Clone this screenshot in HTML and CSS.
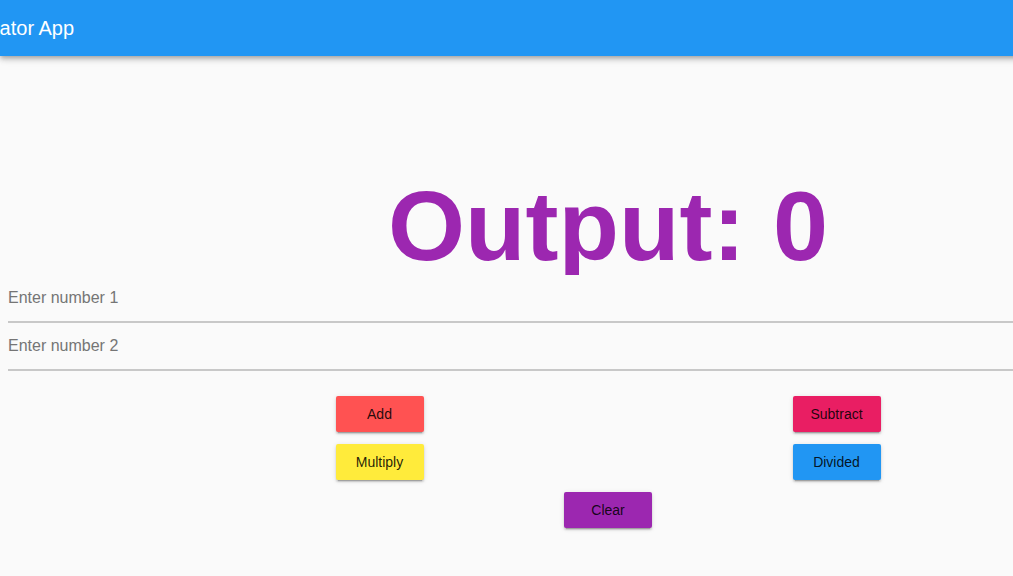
FILE: index.html
```html
<!DOCTYPE html>
<html lang="en">
<head>
<meta charset="utf-8">
<title>Calculator App</title>
<link rel="stylesheet" href="styles.css">
</head>
<body>
<div class="page">
  <header class="appbar">
    <h1 class="title">Calculator App</h1>
  </header>
  <main class="content">
    <div class="output">Output: 0</div>
    <div class="fields">
      <input class="field" type="text" placeholder="Enter number 1">
      <input class="field" type="text" placeholder="Enter number 2">
    </div>
    <div class="buttons">
      <div class="btn-col">
        <button class="btn btn-add">Add</button>
        <button class="btn btn-multiply">Multiply</button>
      </div>
      <div class="btn-col">
        <button class="btn btn-subtract">Subtract</button>
        <button class="btn btn-divide">Divided</button>
      </div>
    </div>
    <div class="clear-row">
      <button class="btn btn-clear">Clear</button>
    </div>
  </main>
</div>
</body>
</html>
```
FILE: styles.css
```css
html, body {
  margin: 0;
  padding: 0;
  height: 100%;
  overflow: hidden;
  background: #fafafa;
  font-family: "Liberation Sans", Arial, sans-serif;
}

.page {
  width: 1216px;
}

.appbar {
  height: 56px;
  background: #2196f3;
  box-shadow: 0 2px 4px -1px rgba(0,0,0,0.2), 0 4px 5px 0 rgba(0,0,0,0.14), 0 1px 10px 0 rgba(0,0,0,0.12);
  display: flex;
  align-items: center;
  position: relative;
  z-index: 1;
}

.title {
  margin: 0 0 0 -56px;
  font-size: 20px;
  font-weight: 400;
  line-height: 56px;
  color: #ffffff;
  white-space: nowrap;
}

.content {
  display: flex;
  flex-direction: column;
}

.output {
  margin-top: 119px;
  height: 99px;
  overflow: hidden;
  text-align: center;
  font-size: 99px;
  line-height: 99px;
  font-weight: 700;
  color: #9c27b0;
  padding-top: 1px;
}

.fields {
  display: flex;
  flex-direction: column;
  padding-left: 8px;
}

.field {
  display: block;
  box-sizing: border-box;
  width: 100%;
  height: 48px;
  margin: 0;
  padding: 13px 0;
  border: 0;
  border-bottom: 2px solid #c8c8c8;
  background: transparent;
  font-family: "Liberation Sans", Arial, sans-serif;
  font-size: 16px;
  line-height: 20px;
  color: rgba(0,0,0,0.87);
  outline: none;
}

.field::placeholder {
  color: #757575;
  opacity: 1;
}

.buttons {
  width: 914px;
  margin: 25px auto 0;
  display: flex;
  justify-content: space-around;
}

.btn-col {
  display: flex;
  flex-direction: column;
  gap: 12px;
}

.clear-row {
  display: flex;
  justify-content: center;
  margin-top: 12px;
}

.btn {
  width: 88px;
  height: 36px;
  border: 0;
  border-radius: 2px;
  padding: 0;
  font-family: "Liberation Sans", Arial, sans-serif;
  font-size: 14px;
  color: rgba(0,0,0,0.87);
  box-shadow: 0 2px 2px 0 rgba(0,0,0,0.14), 0 3px 1px -2px rgba(0,0,0,0.2), 0 1px 5px 0 rgba(0,0,0,0.12);
  cursor: pointer;
}

.btn-add { background: #ff5252; }
.btn-multiply { background: #ffeb3b; }
.btn-subtract { background: #e91e63; }
.btn-divide { background: #2196f3; }
.btn-clear { background: #9c27b0; }
```
